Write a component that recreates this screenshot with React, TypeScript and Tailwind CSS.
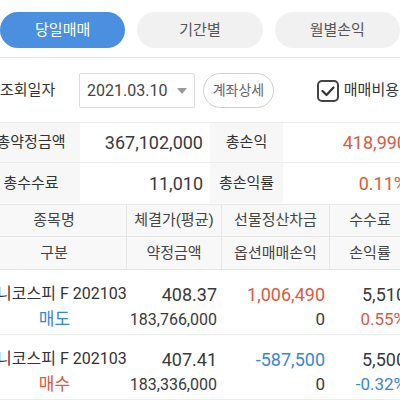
export default function App() {
  const font = { fontFamily: 'Roboto, "Noto Sans CJK KR", sans-serif' }
  const red = 'text-[#e0583f]'
  const blue = 'text-[#3a86d8]'

  const trades = [
    { name: '미니코스피 F 202103', side: '매도', sideColor: blue, price: '408.37', amount: '183,766,000', settle: '1,006,490', settleColor: red, option: '0', fee: '5,510', rate: '0.55%', rateColor: red },
    { name: '미니코스피 F 202103', side: '매수', sideColor: red, price: '407.41', amount: '183,336,000', settle: '-587,500', settleColor: blue, option: '0', fee: '5,500', rate: '-0.32%', rateColor: blue },
  ]

  return (
    <div className="w-[400px] h-[400px] overflow-hidden bg-white text-[#333]" style={font}>
      {/* Tabs */}
      <div className="flex gap-3 pt-3 pb-[9px] border-b border-[#e8e8e8]">
        <button className="flex-1 h-9 rounded-full bg-[#4a8fe0] text-white text-[15px]">당일매매</button>
        <button className="flex-1 h-9 rounded-full bg-[#f1f1f1] text-[#555] text-[15px]">기간별</button>
        <button className="flex-1 h-9 rounded-full bg-[#f1f1f1] text-[#555] text-[15px]">월별손익</button>
      </div>

      {/* Filter row */}
      <div className="flex items-center pt-[15px] pb-[14px]">
        <span className="w-[79px] text-[15px] text-[#333]">조회일자</span>
        <div className="flex items-center justify-between w-[116px] h-[35px] border border-[#dcdcdc] rounded-[2px] pl-[7px] pr-[7px]">
          <span className="text-[16px] text-[#444]">2021.03.10</span>
          <svg width="10" height="6" viewBox="0 0 10 6">
            <path d="M0 0 L10 0 L5 6 Z" fill="#9a9a9a" />
          </svg>
        </div>
        <div className="ml-2 w-[71px] h-[35px] rounded-full border border-[#cfcfcf] flex items-center justify-center text-[14px] text-[#666]">
          계좌상세
        </div>
        <div className="ml-auto flex items-center gap-[5px] mr-[1px]">
          <svg width="22" height="22" viewBox="0 0 22 22">
            <rect x="1" y="1" width="20" height="20" rx="4" fill="none" stroke="#444" strokeWidth="2" />
            <path d="M5.5 11 L9.5 15 L16.5 7.5" fill="none" stroke="#333" strokeWidth="2.2" strokeLinecap="round" strokeLinejoin="round" />
          </svg>
          <span className="text-[15px] text-[#333]">매매비용</span>
        </div>
      </div>

      {/* Summary */}
      <div className="-ml-[18px] w-[428px] border-t border-[#ececec]">
        <div className="grid grid-cols-[98px_130px_73px_127px] h-10 border-b border-[#ececec]">
          <div className="bg-[#f7f7f7] flex items-center justify-center text-[15px]">총약정금액</div>
          <div className="flex items-center justify-end pr-[7px] text-[18px] text-[#3a3a3a]">367,102,000</div>
          <div className="bg-[#f7f7f7] flex items-center justify-center text-[15px]">총손익</div>
          <div className={`flex items-center justify-end pr-[3px] text-[18px] ${red}`}>418,990</div>
        </div>
        <div className="grid grid-cols-[98px_130px_73px_127px] h-10">
          <div className="bg-[#f7f7f7] flex items-center justify-center text-[15px]">총수수료</div>
          <div className="flex items-center justify-end pr-[7px] text-[18px] text-[#3a3a3a]">11,010</div>
          <div className="bg-[#f7f7f7] flex items-center justify-center text-[15px]">총손익률</div>
          <div className={`flex items-center justify-end pr-[3px] text-[18px] ${red}`}>0.11%</div>
        </div>
      </div>

      {/* Header table */}
      <div className="-ml-[18px] w-[428px] mt-px bg-[#f8f8f8] border-t border-b border-[#e6e6e6] text-[15px] text-[#444]">
        <div className="grid grid-cols-[145px_95px_108px_80px] h-8 border-b border-[#e6e6e6]">
          <div className="flex items-center justify-center border-r border-[#e6e6e6]">종목명</div>
          <div className="flex items-center justify-center border-r border-[#e6e6e6]">체결가(평균)</div>
          <div className="flex items-center justify-center border-r border-[#e6e6e6]">선물정산차금</div>
          <div className="flex items-center justify-center">수수료</div>
        </div>
        <div className="grid grid-cols-[145px_95px_108px_80px] h-8">
          <div className="flex items-center justify-center border-r border-[#e6e6e6]">구분</div>
          <div className="flex items-center justify-center border-r border-[#e6e6e6]">약정금액</div>
          <div className="flex items-center justify-center border-r border-[#e6e6e6]">옵션매매손익</div>
          <div className="flex items-center justify-center">손익률</div>
        </div>
      </div>

      {/* Trades */}
      <div className="-ml-[18px] w-[428px]">
        {trades.map((t, i) => (
          <div key={i} className="grid grid-cols-[145px_95px_108px_80px] pt-[11px] pb-[2px] border-b border-[#ececec]">
            <div className="flex flex-col items-center">
              <span className="h-[26px] flex items-center whitespace-nowrap text-[16px] text-[#333]">{t.name}</span>
              <span className={`h-[25px] flex items-center text-[17px] ${t.sideColor}`}>{t.side}</span>
            </div>
            <div className="flex flex-col items-end pr-[5px]">
              <span className="h-[26px] flex items-center text-[18px] text-[#3a3a3a]">{t.price}</span>
              <span className="h-[25px] flex items-center text-[16px] text-[#3a3a3a]">{t.amount}</span>
            </div>
            <div className="flex flex-col items-end pr-[5px]">
              <span className={`h-[26px] flex items-center text-[18px] ${t.settleColor}`}>{t.settle}</span>
              <span className="h-[25px] flex items-center text-[17px] text-[#3a3a3a]">{t.option}</span>
            </div>
            <div className="flex flex-col items-end pr-[4px]">
              <span className="h-[26px] flex items-center text-[18px] text-[#3a3a3a]">{t.fee}</span>
              <span className={`h-[25px] flex items-center text-[17px] ${t.rateColor}`}>{t.rate}</span>
            </div>
          </div>
        ))}
      </div>
    </div>
  )
}
